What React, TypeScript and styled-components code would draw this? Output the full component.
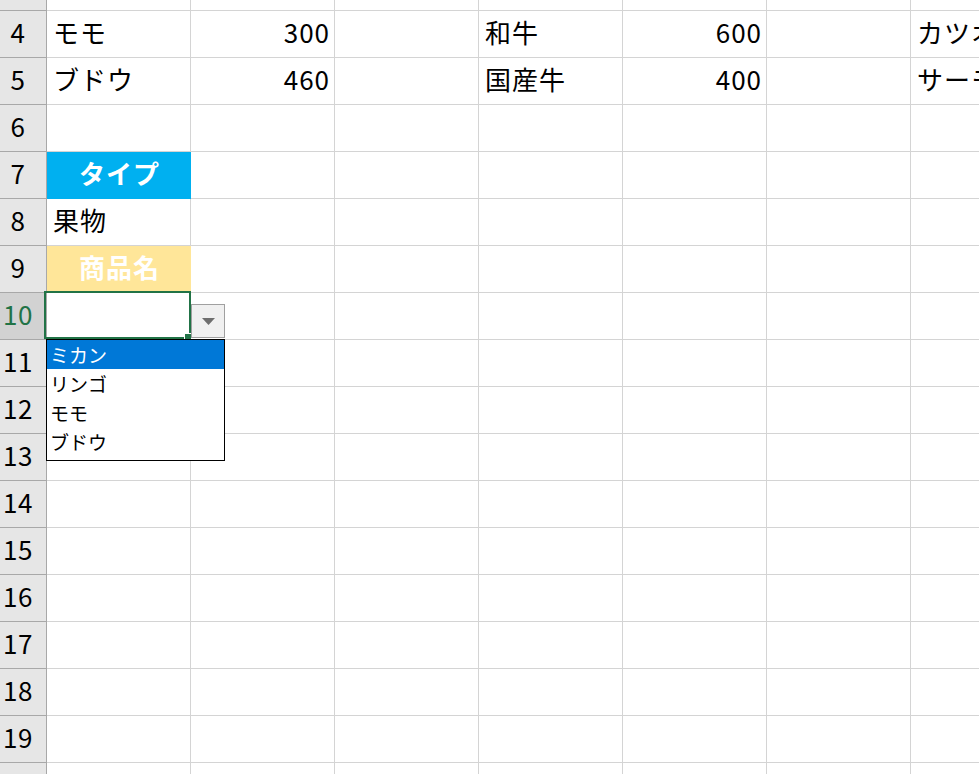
import * as React from 'react';
import styled, { createGlobalStyle } from 'styled-components';

const GRID_LINE = '#d4d4d4';
const HEADER_LINE = '#a8a8a8';
const EXCEL_GREEN = '#217346';

const GlobalStyle = createGlobalStyle`
  html, body {
    margin: 0;
    padding: 0;
    background: #fff;
    overflow: hidden;
  }
`;

type Cell = {
  text?: string;
  align?: 'left' | 'right' | 'center';
  fill?: string;
  bold?: boolean;
  color?: string;
};

// rows 3 and 20 are only partly in view, so their numbers are not shown
const ROWS: { num: number; cells: Cell[]; hideNum?: boolean }[] = [
  { num: 3, cells: [], hideNum: true },
  {
    num: 4,
    cells: [
      { text: 'モモ' },
      { text: '300', align: 'right' },
      {},
      { text: '和牛' },
      { text: '600', align: 'right' },
      {},
      { text: 'カツオ' },
    ],
  },
  {
    num: 5,
    cells: [
      { text: 'ブドウ' },
      { text: '460', align: 'right' },
      {},
      { text: '国産牛' },
      { text: '400', align: 'right' },
      {},
      { text: 'サーモン' },
    ],
  },
  { num: 6, cells: [] },
  {
    num: 7,
    cells: [{ text: 'タイプ', align: 'center', fill: '#00b0f0', bold: true, color: '#fff' }],
  },
  { num: 8, cells: [{ text: '果物' }] },
  {
    num: 9,
    cells: [{ text: '商品名', align: 'center', fill: '#ffe699', bold: true, color: '#fff' }],
  },
  { num: 10, cells: [] },
  ...Array.from({ length: 9 }, (_, i) => ({ num: 11 + i, cells: [] as Cell[] })),
  { num: 20, cells: [], hideNum: true },
];

const COLS = 7;
const SELECTED_ROW = 10;
const OPTIONS = ['ミカン', 'リンゴ', 'モモ', 'ブドウ'];

// the active cell (A10) with its data-validation list dropped open
function ActiveCellOverlay() {
  return (
    <>
      <Selection>
        <FillHandle />
      </Selection>
      <DropButton>
        <svg width="13" height="7" viewBox="0 0 13 7">
          <path d="M0 0 H13 L6.5 7 Z" fill="#6e6e6e" />
        </svg>
      </DropButton>
      <OptionList>
        {OPTIONS.map((opt, i) => (
          <Option key={opt} $active={i === 0}>
            {opt}
          </Option>
        ))}
      </OptionList>
    </>
  );
}

export default function App() {
  return (
    <>
      <GlobalStyle />
      <Sheet>
        <Grid>
          {ROWS.map((row) => (
            <React.Fragment key={row.num}>
              <RowHeader $selected={row.num === SELECTED_ROW}>
                {row.hideNum ? '' : row.num}
              </RowHeader>
              {Array.from({ length: COLS }, (_, c) => {
                const cell = row.cells[c] || {};
                const active = row.num === SELECTED_ROW && c === 0;
                return (
                  <GridCell
                    key={c}
                    $align={cell.align || 'left'}
                    $fill={cell.fill}
                    $bold={cell.bold}
                    $color={cell.color}
                    $active={active}
                  >
                    {cell.text}
                    {active && <ActiveCellOverlay />}
                  </GridCell>
                );
              })}
            </React.Fragment>
          ))}
        </Grid>
      </Sheet>
    </>
  );
}

const Sheet = styled.div`
  width: 979px;
  height: 774px;
  overflow: hidden;
  background: #fff;
  font-family: 'Noto Sans CJK JP', 'Noto Sans', sans-serif;
`;

const Grid = styled.div`
  display: grid;
  grid-template-columns: 47px repeat(${COLS}, 144px);
  grid-template-rows: 11px repeat(17, 47px);
  width: max-content;
`;

const RowHeader = styled.div<{ $selected?: boolean }>`
  box-sizing: border-box;
  display: flex;
  align-items: center;
  justify-content: center;
  padding: 0 10px 4px 0;
  background: ${(p) => (p.$selected ? '#d2d2d2' : '#e6e6e6')};
  color: ${(p) => (p.$selected ? EXCEL_GREEN : '#000')};
  border-right: 1px solid ${HEADER_LINE};
  border-bottom: 1px solid ${HEADER_LINE};
  font-size: 26px;
  line-height: 1;
  letter-spacing: 0.5px;
  overflow: hidden;
`;

const GridCell = styled.div<{
  $align: 'left' | 'right' | 'center';
  $fill?: string;
  $bold?: boolean;
  $color?: string;
  $active?: boolean;
}>`
  position: ${(p) => (p.$active ? 'relative' : 'static')};
  box-sizing: border-box;
  display: flex;
  align-items: center;
  justify-content: ${(p) =>
    p.$align === 'right' ? 'flex-end' : p.$align === 'center' ? 'center' : 'flex-start'};
  padding: 0 4px 4px 6px;
  background: ${(p) => p.$fill || '#fff'};
  color: ${(p) => p.$color || '#000'};
  font-weight: ${(p) => (p.$bold ? 700 : 400)};
  font-size: 26px;
  line-height: 1;
  letter-spacing: 1px;
  white-space: nowrap;
  border-right: 1px solid ${(p) => (p.$fill ? 'transparent' : GRID_LINE)};
  border-bottom: 1px solid ${(p) => (p.$fill ? 'transparent' : GRID_LINE)};
`;

const Selection = styled.div`
  position: absolute;
  left: -3px;
  top: -2px;
  width: 147px;
  height: 48px;
  box-sizing: border-box;
  border: 2px solid ${EXCEL_GREEN};
`;

const FillHandle = styled.div`
  position: absolute;
  right: -2px;
  bottom: -3px;
  width: 6px;
  height: 6px;
  background: ${EXCEL_GREEN};
  border-left: 1px solid #fff;
  border-top: 1px solid #fff;
`;

const DropButton = styled.div`
  position: absolute;
  left: 144px;
  top: 11px;
  width: 34px;
  height: 34px;
  box-sizing: border-box;
  display: flex;
  align-items: center;
  justify-content: center;
  background: #f0f0f0;
  border: 1px solid #a0a0a0;
`;

const OptionList = styled.div`
  position: absolute;
  left: -1px;
  top: 46px;
  z-index: 1;
  width: 179px;
  height: 122px;
  box-sizing: border-box;
  padding-bottom: 3px;
  background: #fff;
  border: 1px solid #000;
  display: flex;
  flex-direction: column;
  letter-spacing: 0;
`;

const Option = styled.div<{ $active?: boolean }>`
  height: 29px;
  display: flex;
  align-items: center;
  padding: 0 0 1px 3px;
  font-size: 19px;
  font-weight: 400;
  line-height: 1;
  background: ${(p) => (p.$active ? '#0078d7' : 'transparent')};
  color: ${(p) => (p.$active ? '#fff' : '#000')};
`;
